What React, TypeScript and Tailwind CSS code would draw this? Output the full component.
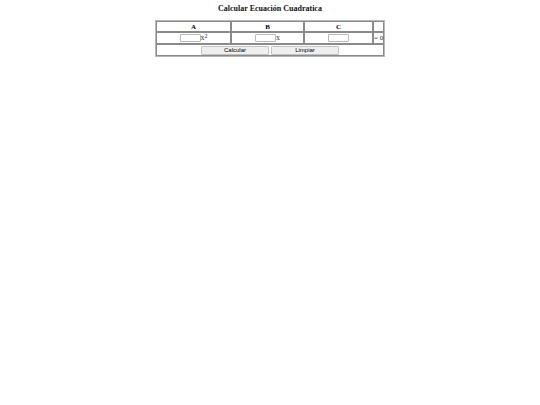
const cell = "border border-[#8a8a8a] p-0 text-center";
const input =
  "h-2 w-[21px] rounded-[1px] border border-[#b8b8b8] bg-white px-px align-middle text-[6px] outline-none";
const button =
  "h-[9px] w-[68px] rounded-[1px] border border-[#c4c4c4] bg-[#efefef] text-center font-['Liberation_Sans',Arial,sans-serif] text-[6px] leading-none text-black";

export default function App() {
  return (
    <main className="bg-white pt-1 font-['Liberation_Serif','Times_New_Roman',serif] text-[7px] leading-[8px] text-black">
      <h1 className="text-center text-[8px] font-bold leading-[9px] text-[#111]">Calcular Ecuación Cuadratica</h1>
      <form className="mt-[7px]" onSubmit={(event) => event.preventDefault()}>
        <table className="mx-auto w-[230px] table-fixed border-separate border-spacing-0 border border-[#b8b8b8]">
          <colgroup>
            <col className="w-[75px]" />
            <col className="w-[73px]" />
            <col className="w-[69px]" />
            <col />
          </colgroup>
          <thead>
            <tr className="h-[11px]">
              <th className={cell} scope="col" id="col-a">A</th>
              <th className={cell} scope="col" id="col-b">B</th>
              <th className={cell} scope="col" id="col-c">C</th>
              <td className={cell} />
            </tr>
          </thead>
          <tbody className="text-[#333]">
            <tr className="h-3">
              <td className={cell}>
                <div className="flex h-2 items-center justify-center text-[8px]">
                  <input className={input} type="text" aria-labelledby="col-a" />
                  <span>x</span>
                  <sup className="static self-start text-[6px] leading-[4px]">2</sup>
                </div>
              </td>
              <td className={cell}>
                <div className="flex h-2 items-center justify-center text-[8px]">
                  <input className={input} type="text" aria-labelledby="col-b" />
                  <span>x</span>
                </div>
              </td>
              <td className={cell}>
                <div className="flex h-2 items-center justify-center">
                  <input className={input} type="text" aria-labelledby="col-c" />
                </div>
              </td>
              <td className={`${cell} whitespace-nowrap`}>= 0</td>
            </tr>
            <tr className="h-3">
              <td className={cell} colSpan={4}>
                <div className="flex items-center justify-center gap-[2px]">
                  <button className={button} type="submit">Calcular</button>
                  <button className={button} type="reset">Limpiar</button>
                </div>
              </td>
            </tr>
          </tbody>
        </table>
      </form>
    </main>
  );
}
